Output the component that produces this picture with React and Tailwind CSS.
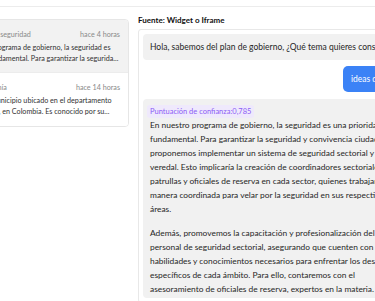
export default function App() {
  return (
    <div className="w-[375px] h-[301px] overflow-hidden bg-white font-['Lato',sans-serif] text-[#262626]">
      <div className="h-[7px] border-b border-[#ececec]" />
      <div className="flex -ml-[65px] gap-[9px]">
        <aside className="w-[194px] shrink-0 pt-[12px]">
          <div className="rounded-[4px] border border-[#e6e6e6] overflow-hidden">
            <div className="bg-[#f2f2f2] px-[8px] pt-[9px] pb-[8px]">
              <div className="flex justify-between text-[7.2px] leading-[11px] text-[#8a8a8a]">
                <span>Propuestas sobre seguridad</span>
                <span>hace 4 horas</span>
              </div>
              <div className="mt-[2px] text-[7.2px] leading-[11px] text-[#333]">
                <div className="whitespace-nowrap">Según nuestro programa de gobierno, la seguridad es</div>
                <div className="whitespace-nowrap">una prioridad fundamental. Para garantizar la segurida...</div>
              </div>
            </div>
            <div className="bg-white border-t border-[#ececec] px-[8px] pt-[9px] pb-[9px]">
              <div className="flex justify-between text-[7.2px] leading-[11px] text-[#8a8a8a]">
                <span>Historia de Macanía</span>
                <span>hace 14 horas</span>
              </div>
              <div className="mt-[2px] text-[7.2px] leading-[11px] text-[#333]">
                <div className="whitespace-nowrap">Macanía es un municipio ubicado en el departamento</div>
                <div className="whitespace-nowrap">de Cundinamarca, en Colombia. Es conocido por su...</div>
              </div>
            </div>
          </div>
        </aside>
        <main className="w-[295px] shrink-0 pt-[8px]">
          <div className="text-[8px] leading-[11px] font-bold text-[#111]">Fuente: Widget o Iframe</div>
          <div className="mt-[3px] border border-[#e8e8e8] rounded-[3px] p-[4px] flex flex-col">
            <div className="bg-[#f1f1f1] rounded-[4px] px-[7px] h-[26px] flex items-center text-[8.5px] whitespace-nowrap">
              Hola, sabemos del plan de gobierno, ¿Qué tema quieres consultar?
            </div>
            <div className="self-end mt-[6px] bg-[#3b82f6] rounded-[5px] px-[8px] h-[26px] flex items-center text-[8.5px] text-white whitespace-nowrap">
              ideas de seguridad
            </div>
            <div className="mt-[7px] bg-[#f1f1f1] rounded-[4px] px-[7px] pt-[5px] pb-[2px] text-[8.4px] leading-[14px] whitespace-nowrap">
              <div className="inline-block -ml-[3px] px-[3px] rounded-[3px] bg-[#efe9fc] text-[#8b5cf6] text-[7.5px] leading-[13px]">Puntuación de confianza:0,785</div>
              <p>
                En nuestro programa de gobierno, la seguridad es una prioridad<br />
                fundamental. Para garantizar la seguridad y convivencia ciudadana,<br />
                proponemos implementar un sistema de seguridad sectorial y<br />
                veredal. Esto implicaría la creación de coordinadores sectoriales,<br />
                patrullas y oficiales de reserva en cada sector, quienes trabajarán de<br />
                manera coordinada para velar por la seguridad en sus respectivas<br />
                áreas.
              </p>
              <p className="mt-[10px]">
                Además, promovemos la capacitación y profesionalización del<br />
                personal de seguridad sectorial, asegurando que cuenten con las<br />
                habilidades y conocimientos necesarios para enfrentar los desafíos<br />
                específicos de cada ámbito. Para ello, contaremos con el<br />
                asesoramiento de oficiales de reserva, expertos en la materia.
              </p>
            </div>
          </div>
        </main>
      </div>
    </div>
  );
}
